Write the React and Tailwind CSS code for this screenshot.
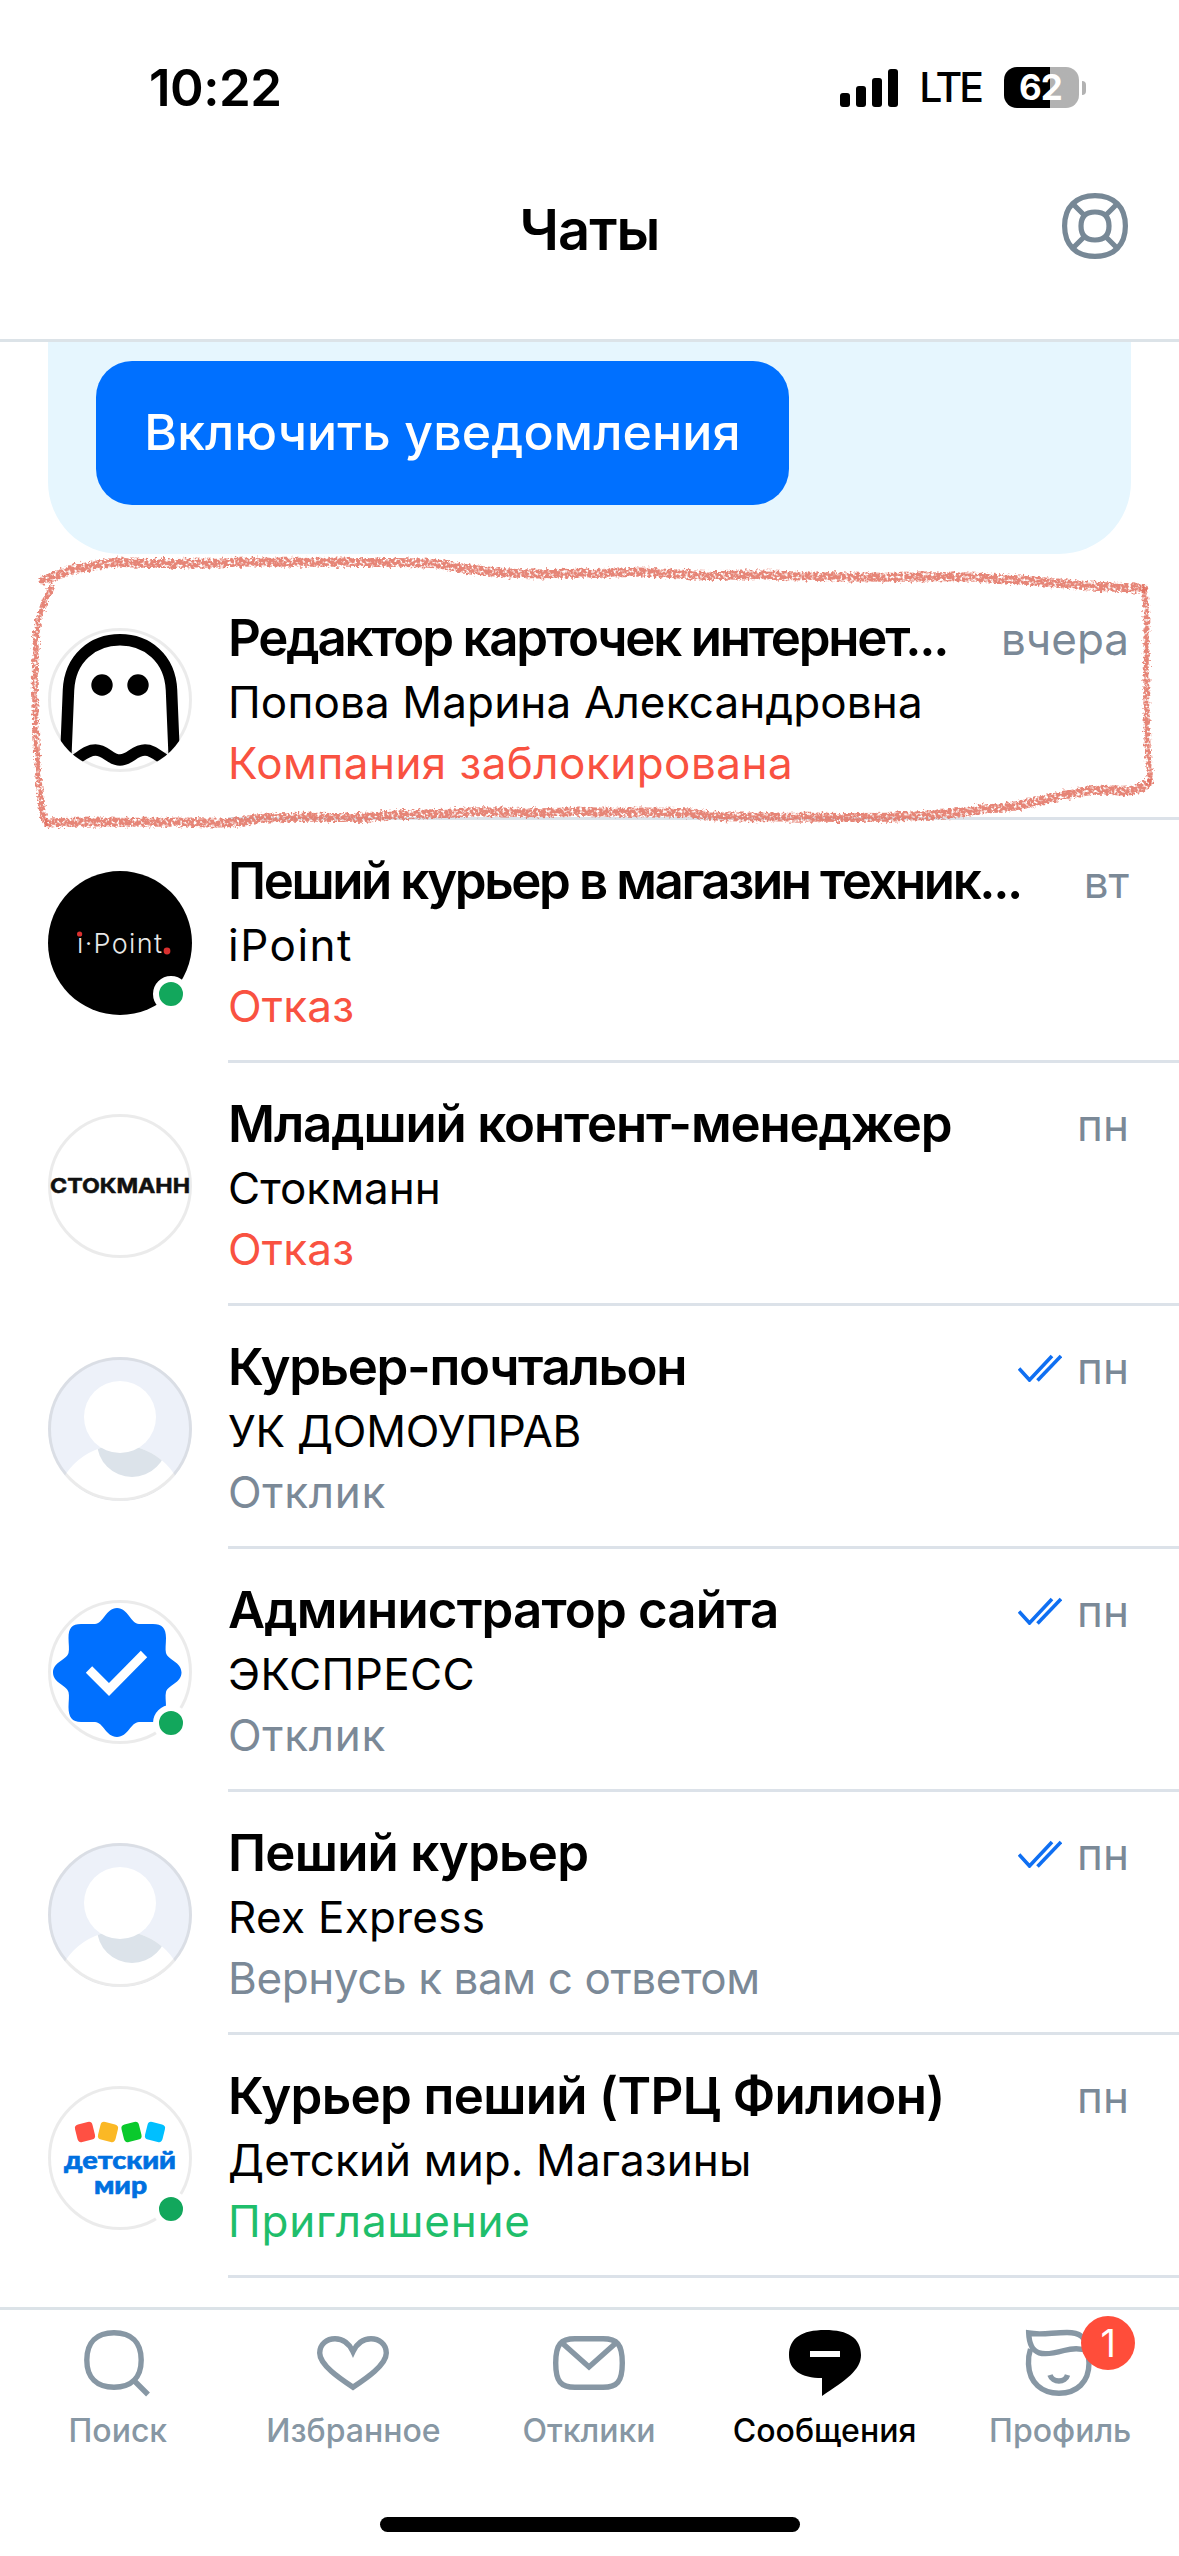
import React from 'react';
import clsx from 'clsx';

const chats = [
  {
    id: 1,
    title: 'Редактор карточек интернет...',
    titleClass: 'tracking-[-2.2px]',
    company: 'Попова Марина Александровна',
    companyClass: 'tracking-[0.15px]',
    status: 'Компания заблокирована',
    statusClass: 'text-[#f95241] tracking-[0.45px]',
    date: 'вчера',
    avatar: 'ghost',
  },
  {
    id: 2,
    title: 'Пеший курьер в магазин техник...',
    titleClass: 'tracking-[-2.4px]',
    company: 'iPoint',
    companyClass: 'tracking-[1.5px]',
    status: 'Отказ',
    statusClass: 'text-[#f95241] tracking-[0.2px]',
    date: 'вт',
    avatar: 'ipoint',
    online: true,
  },
  {
    id: 3,
    title: 'Младший контент-менеджер',
    titleClass: 'tracking-[-1.15px]',
    company: 'Стокманн',
    status: 'Отказ',
    statusClass: 'text-[#f95241] tracking-[0.2px]',
    date: 'пн',
    avatar: 'stockmann',
  },
  {
    id: 4,
    title: 'Курьер-почтальон',
    titleClass: 'tracking-[-1.35px]',
    company: 'УК ДОМОУПРАВ',
    companyClass: 'tracking-[-0.2px]',
    status: 'Отклик',
    statusClass: 'text-[#7b8997] tracking-[0.7px]',
    date: 'пн',
    read: true,
    avatar: 'person',
  },
  {
    id: 5,
    title: 'Администратор сайта',
    titleClass: 'tracking-[-0.85px]',
    company: 'ЭКСПРЕСС',
    companyClass: 'tracking-[0.4px]',
    status: 'Отклик',
    statusClass: 'text-[#7b8997] tracking-[0.7px]',
    date: 'пн',
    read: true,
    avatar: 'verified',
    online: true,
  },
  {
    id: 6,
    title: 'Пеший курьер',
    titleClass: 'tracking-[-0.75px]',
    company: 'Rex Express',
    companyClass: 'tracking-[0.3px]',
    status: 'Вернусь к вам с ответом',
    statusClass: 'text-[#7b8997] tracking-[-0.4px]',
    date: 'пн',
    read: true,
    avatar: 'person',
  },
  {
    id: 7,
    title: 'Курьер пеший (ТРЦ Филион)',
    titleClass: 'tracking-[-0.65px]',
    company: 'Детский мир. Магазины',
    companyClass: 'tracking-[0.1px]',
    status: 'Приглашение',
    statusClass: 'text-[#1fbe6b] tracking-[0.75px]',
    date: 'пн',
    avatar: 'detmir',
    online: true,
  },
];

const GhostLogo = () => (
  <g fill="none" stroke="#000" strokeWidth="11.5">
    <path d="M17.5 135L20.5 62C22 30 45 11.800 72 11.800C99 11.800 122 30 123.500 62L126.500 135" />
    <path d="M27 132C36 126 40 122 47.5 122C58 122 62 132 72 132S86 122 97 122C104 122 108 126 117 132" />
    <ellipse cx="54" cy="57" rx="10.7" ry="10.7" fill="#000" stroke="none" />
    <ellipse cx="90" cy="57" rx="10.7" ry="10.7" fill="#000" stroke="none" />
  </g>
);

const IPointLogo = () => (
  <g>
    <rect width="144" height="144" fill="#000" />
    <text x="29" y="82" fontSize="27" fontWeight="300" fill="#e8e8e8" textLength="85" fontFamily="Inter, sans-serif">i·Point</text>
    <circle cx="31.6" cy="63" r="2.6" fill="#d9302f" />
    <circle cx="119" cy="80" r="3.4" fill="#d9302f" />
  </g>
);

const StockmannLogo = () => (
  <text x="2" y="79" fontSize="20" fontWeight="700" fill="#111" stroke="#111" strokeWidth="0.5" textLength="140" lengthAdjust="spacingAndGlyphs" fontFamily="Inter, sans-serif">СТОКМАНН</text>
);

const PersonPlaceholder = () => (
  <g>
    <rect width="144" height="144" fill="#edf1f9" />
    <circle cx="72" cy="153" r="65" fill="#fff" />
    <circle cx="84" cy="85" r="35" fill="#dce3ea" clipPath="url(#person-body)" />
    <circle cx="72" cy="60" r="36" fill="#fff" />
  </g>
);

const VerifiedLogo = () => (
  <g>
    <path
      fill="#0070ff"
      d="M69 8C80 8 83 24 91 24H105C114 24 118 28 118 38C118 44 117 49 118 53C120 60 133.500 62 133.500 72.500S120 85 118 92C117 96 118 101 118 107C118 117 114 122 105 122H91C83 122 80 137 69 137S55 122 47 122H33C24 122 20.500 117 20.500 107C20.500 101 21.500 96 20.500 92C18.500 85 5 83 5 72.500S18.500 60 20.500 53C21.500 49 20.500 44 20.500 38C20.500 28 24 24 33 24H47C55 24 58 8 69 8Z"
    />
    <path d="M41 69.500L61 89.500L96 54" fill="none" stroke="#fff" strokeWidth="9" />
  </g>
);

const DetmirLogo = () => (
  <g>
    <rect x="28" y="37" width="18" height="18" rx="4" fill="#ff5043" transform="rotate(-14 37 46)" />
    <rect x="51" y="37" width="18" height="18" rx="4" fill="#fbb825" transform="rotate(14 60 46)" />
    <rect x="74.500" y="37" width="18" height="18" rx="4" fill="#0ac92c" transform="rotate(-14 83.500 46)" />
    <rect x="98" y="37" width="18" height="18" rx="4" fill="#00bfff" transform="rotate(14 107 46)" />
    <g fill="#0070e0" stroke="#0070e0" strokeWidth="0.6" fontSize="24" fontWeight="900" fontFamily="Lato, 'Open Sans', sans-serif">
      <text x="16" y="83" textLength="112" lengthAdjust="spacingAndGlyphs">детский</text>
      <text x="46" y="108" textLength="53" lengthAdjust="spacingAndGlyphs">мир</text>
    </g>
  </g>
);

const logos = {
  ghost: GhostLogo,
  ipoint: IPointLogo,
  stockmann: StockmannLogo,
  person: PersonPlaceholder,
  verified: VerifiedLogo,
  detmir: DetmirLogo,
};

const Avatar = ({ kind, online }) => {
  const Logo = logos[kind];
  return (
    <div className="relative mt-[51px] ml-12 h-36 w-36 shrink-0">
      <svg viewBox="0 0 144 144" className="h-full w-full">
        <defs>
          <clipPath id="avatar-circle"><circle cx="72" cy="72" r="72" /></clipPath>
          <clipPath id="person-body"><circle cx="72" cy="153" r="65" /></clipPath>
        </defs>
        <g clipPath="url(#avatar-circle)">
          <Logo />
        </g>
        {kind !== 'ipoint' && <circle cx="72" cy="72" r="70.5" fill="none" stroke="#000" strokeOpacity="0.08" strokeWidth="3" />}
      </svg>
      {online && (
        <span className="absolute top-[105px] left-[105px] h-9 w-9 rounded-full border-6 border-white bg-[#12a75c]" />
      )}
    </div>
  );
};

const ReadTicks = () => (
  <svg viewBox="0 0 44 28" className="h-7 w-11" fill="none" stroke="#0f6ff2" strokeWidth="3.6">
    <path d="M1 14.500L11.500 26L34 2" />
    <path d="M19.500 26.500L43 2" />
  </svg>
);

const ChatRow = ({ chat }) => (
  <div className="flex h-[243px]">
    <Avatar kind={chat.avatar} online={chat.online} />
    <div className="ml-9 flex min-w-0 flex-1 flex-col border-b-3 border-[#dce2e9] pt-8">
      <div className="flex items-center justify-between pr-[50px]">
        <h2 className={clsx('-mt-0.5 text-[51px] leading-[60px] font-semibold whitespace-nowrap', chat.titleClass)}>{chat.title}</h2>
        <div className="flex items-center gap-[15px]">
          {chat.read && <ReadTicks />}
          <span className="text-[44px] leading-[60px] text-[#7b8997]">{chat.date}</span>
        </div>
      </div>
      <p className={clsx('text-[44px] leading-[66px] whitespace-nowrap', chat.companyClass)}>{chat.company}</p>
      <p className={clsx('text-[44px] leading-[56px] whitespace-nowrap', chat.statusClass)}>{chat.status}</p>
    </div>
  </div>
);

const StatusBar = () => (
  <div className="flex h-[120px] items-center justify-between pt-[55px] pr-[93px] pl-[149px]">
    <span className="text-[51px] leading-none font-semibold tracking-[-0.5px]">10:22</span>
    <div className="flex items-center">
      <div className="flex h-[38px] items-end gap-1.5">
        <span className="h-3.5 w-2.5 rounded-[3px] bg-black" />
        <span className="h-[21px] w-2.5 rounded-[3px] bg-black" />
        <span className="h-[29px] w-2.5 rounded-[3px] bg-black" />
        <span className="h-[38px] w-2.5 rounded-[3px] bg-black" />
      </div>
      <span className="ml-[21px] text-[41px] leading-none font-medium tracking-[-3px]">LTE</span>
      <div className="ml-[23px] flex h-[41px] w-[75px] items-center justify-center rounded-[13px] bg-linear-to-r from-black from-62% to-[#b2b2b2] to-62%">
        <span className="pr-0.5 text-[35px] leading-none font-bold tracking-[-1px] text-white">62</span>
      </div>
      <span className="ml-[3px] h-3.5 w-1 rounded-r-full bg-[#b2b2b2]" />
    </div>
  </div>
);

const HelpIcon = () => (
  <svg viewBox="0 0 66 66" className="h-[66px] w-[66px]" fill="none" stroke="#778896" strokeWidth="5.2">
    <path d="M33 2.600C52 2.600 63.400 14 63.400 33S52 63.400 33 63.400S2.600 52 2.600 33S14 2.600 33 2.600Z" />
    <path d="M33 19C42.500 19 47 24 47 33S42.500 47 33 47S19 42 19 33S23.500 19 33 19Z" />
    <path d="M11 11L23.500 23.500M55 11L42.500 23.500M11 55L23.500 42.500M55 55L42.500 42.500" />
  </svg>
);

const Header = () => (
  <header className="grid h-[222px] grid-cols-3 items-center border-b-3 border-[#dce3e8]">
    <span />
    <h1 className="text-center text-[56px] leading-none font-semibold tracking-[-0.9px]">Чаты</h1>
    <div className="mr-[51px] mb-[7px] flex justify-end">
      <HelpIcon />
    </div>
  </header>
);

const SearchIcon = () => (
  <>
    <path d="M32 5.800C49 5.800 59.200 15 59.200 33S49 60.200 32 60.200S4.800 51 4.800 33S15 5.800 32 5.800Z" />
    <path d="M52.500 54L66 67.500" />
  </>
);

const HeartIcon = () => (
  <path d="M36 60.200C23 51.500 2.700 38 2.700 26C2.700 17 10 11.700 18 11.700C26 11.700 32.500 17 36 24.500C39.500 17 46 11.700 54 11.700C62 11.700 69.300 17 69.300 26C69.300 38 49 51.500 36 60.200Z" />
);

const MailIcon = () => (
  <>
    <path d="M22 11.700H50C64 11.700 69.300 17 69.300 36S64 60.300 50 60.300H22C8 60.300 2.700 55 2.700 36S8 11.700 22 11.700Z" />
    <path d="M8 15L36 40L64 15" />
  </>
);

const MessageIcon = () => (
  <>
    <path d="M36 3C59 3 72 11 72 28C72 43 57 53 33 69V51C12 51 0 43 0 28C0 11 13 3 36 3Z" fill="#000" stroke="none" />
    <path d="M21 27H51" stroke="#fff" strokeWidth="6" />
  </>
);

const ProfileIcon = () => (
  <>
    <path d="M6.500 22C4.500 28 4.200 31 4.500 37C5.200 56 18 66.200 35 66.200C53 66.200 65 55 65 36C65 31 64.500 27 63 23" />
    <path d="M4.700 6C17 8.500 28 5.500 43 5.500C55 5.500 62 9 64 24C57 21 49 21 40 23.500C20 29 5.500 30 4.700 6Z" />
    <path d="M26 48C28.500 56 41.500 56 43.500 48" />
  </>
);

const tabs = [
  { id: 'search', label: 'Поиск', Icon: SearchIcon },
  { id: 'favorites', label: 'Избранное', Icon: HeartIcon },
  { id: 'responses', label: 'Отклики', Icon: MailIcon },
  { id: 'messages', label: 'Сообщения', Icon: MessageIcon, active: true },
  { id: 'profile', label: 'Профиль', Icon: ProfileIcon, badge: 1 },
];

const TabBar = () => (
  <nav className="flex h-[249px] flex-col items-center border-t-3 border-[#dce3e8] bg-white">
    <div className="grid h-[207px] w-full grid-cols-5 pr-px">
      {tabs.map(({ id, label, Icon, active, badge }) => (
        <div key={id} className="flex flex-col items-center pt-[17px]">
          <div className="relative">
            <svg viewBox="0 0 72 72" className="h-[72px] w-[72px]" fill="none" stroke="#8797a4" strokeWidth="5.4">
              <Icon />
            </svg>
            {badge && (
              <span className="absolute -top-[11px] left-[57px] flex h-[54px] w-[54px] items-center justify-center rounded-full bg-[#ff4d3a] text-[38px] leading-none text-white">
                {badge}
              </span>
            )}
          </div>
          <span className={clsx('mt-[12px] text-[32px] leading-10 font-medium', active ? 'text-black' : 'text-[#8797a4]')}>{label}</span>
        </div>
      ))}
    </div>
    <div className="h-[15px] w-[420px] rounded-full bg-black" />
  </nav>
);

// Crayon outline drawn by hand around the first chat
const MarkerOutline = () => (
  <svg viewBox="0 0 1179 300" className="pointer-events-none absolute top-[200px] left-0 h-[300px] w-full" fill="none" stroke="#e2705f" strokeOpacity="0.85">
    <defs>
      <filter id="crayon" x="-5%" y="-10%" width="110%" height="120%">
        <feTurbulence type="fractalNoise" baseFrequency="0.35" numOctaves="2" seed="4" result="noise" />
        <feDisplacementMap in="SourceGraphic" in2="noise" scale="7" xChannelSelector="R" yChannelSelector="G" result="rough" />
        <feColorMatrix in="noise" type="matrix" values="0 0 0 0 0  0 0 0 0 0  0 0 0 0 0  0 0 4 0 -1" result="grain" />
        <feComposite in="rough" in2="grain" operator="in" result="chalk" />
        <feGaussianBlur in="chalk" stdDeviation="0.6" />
      </filter>
    </defs>
    <g filter="url(#crayon)" strokeLinecap="round" strokeLinejoin="round">
      <path strokeWidth="9" d="M43 38C55 35 62 31 76 26C92 25 102 22 118 20C150 23 180 21 220 21C260 19 300 21 340 20C380 22 420 18 450 24C485 30 510 32 540 32C570 30 600 33 640 30C680 31 700 35 740 33C780 32 830 36 870 35C910 36 950 33 990 36C1030 38 1060 42 1090 44C1110 45 1130 46 1143 46" />
      <path strokeWidth="6" d="M1143 46C1149 62 1145 90 1147 120C1145 160 1147 190 1148 212C1151 232 1149 240 1149 240" />
      <path strokeWidth="9" d="M1149 240C1142 246 1132 250 1120 249C1100 247 1080 249 1065 253C1040 259 1010 267 980 267C950 274 920 273 895 275C860 276 820 275 780 275C750 274 720 277 700 272C660 268 610 272 579 269C540 273 510 269 470 270C430 273 400 271 370 275C330 277 290 273 255 277C230 283 210 281 180 280C140 281 90 279 48 281" />
      <path strokeWidth="6" d="M46 281C40 268 40 250 39 240C36 210 36 180 35 150C34 130 36 110 36 95C38 75 45 55 52 46" />
    </g>
  </svg>
);

export default function App() {
  return (
    <div className="flex h-[2556px] w-[1179px] flex-col overflow-hidden bg-white font-[Inter,sans-serif] text-black">
      <StatusBar />
      <Header />
      <main className="relative flex-1 overflow-hidden">
        <div className="mx-12 mb-[23px] h-[212px] rounded-b-[72px] bg-[#e6f6fe] pt-[19px] pl-12">
          <button className="h-36 w-[693px] rounded-[36px] bg-[#0070ff] pb-0.5 text-[50px] leading-none font-medium tracking-[0.15px] whitespace-nowrap text-white">
            Включить уведомления
          </button>
        </div>
        {chats.map((chat) => (
          <ChatRow key={chat.id} chat={chat} />
        ))}
        <MarkerOutline />
      </main>
      <TabBar />
    </div>
  );
}
